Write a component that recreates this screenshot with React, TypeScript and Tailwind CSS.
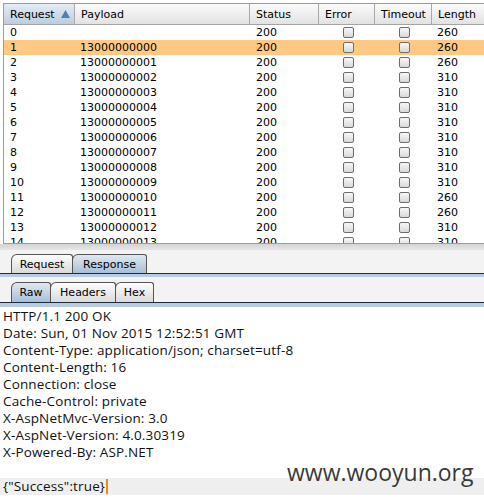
import React from "react";

const rows: [string, string, string, string][] = [
  ["0", "", "200", "260"],
  ["1", "13000000000", "200", "260"],
  ["2", "13000000001", "200", "260"],
  ["3", "13000000002", "200", "310"],
  ["4", "13000000003", "200", "310"],
  ["5", "13000000004", "200", "310"],
  ["6", "13000000005", "200", "310"],
  ["7", "13000000006", "200", "310"],
  ["8", "13000000007", "200", "310"],
  ["9", "13000000008", "200", "310"],
  ["10", "13000000009", "200", "310"],
  ["11", "13000000010", "200", "260"],
  ["12", "13000000011", "200", "260"],
  ["13", "13000000012", "200", "310"],
  ["14", "13000000013", "200", "310"],
];

const cols = "grid grid-cols-[71px_175px_69px_56px_57px_56px]";

function Check() {
  return (
    <div className="w-[11px] h-[11px] rounded-[2px] border border-[#6e6e6e] bg-gradient-to-b from-[#f7f7f7] to-[#d9d9d9]" />
  );
}

function HeaderCell({ label, sorted, last }: { label: string; sorted?: boolean; last?: boolean }) {
  return (
    <div
      className={
        "flex items-center justify-between pl-[6px] pr-[4px] " +
        (last ? "" : "border-r border-[#a9a9a9] ") +
        (sorted
          ? "bg-gradient-to-b from-[#e4ecf4] to-[#bccde0]"
          : "bg-gradient-to-b from-[#fbfbfb] to-[#e2e2e2]")
      }
    >
      <span>{label}</span>
      {sorted && (
        <svg width="9" height="8" viewBox="0 0 9 8">
          <path d="M4.5 0 L9 8 L0 8 Z" fill="#4d7fb8" />
        </svg>
      )}
    </div>
  );
}

function Tab({ label, selected, first, w }: { label: string; selected?: boolean; first?: boolean; w: string }) {
  return (
    <div
      className={
        w +
        " flex items-center justify-center border border-b-0 border-[#555] rounded-tl-[6px] rounded-tr-[3px] " +
        (first ? "" : "-ml-px ") +
        (selected
          ? "bg-gradient-to-b from-[#dfe8f2] to-[#a8bfd7]"
          : "bg-gradient-to-b from-[#fdfdfd] to-[#dadada]")
      }
    >
      {label}
    </div>
  );
}

export default function App() {
  const lines = [
    "HTTP/1.1 200 OK",
    "Date: Sun, 01 Nov 2015 12:52:51 GMT",
    "Content-Type: application/json; charset=utf-8",
    "Content-Length: 16",
    "Connection: close",
    "Cache-Control: private",
    "X-AspNetMvc-Version: 3.0",
    "X-AspNet-Version: 4.0.30319",
    "X-Powered-By: ASP.NET",
    "",
  ];
  return (
    <div className="relative w-[484px] h-[503px] overflow-hidden bg-[#f3f3f3] text-black">
      {/* results table */}
      <div className="pt-[3px] pl-[3px] bg-white">
        <div
          className="border-l border-t border-b border-[#9c9c9c] bg-white text-[11px] leading-none"
          style={{ fontFamily: '"DejaVu Sans", sans-serif' }}
        >
          <div className={cols + " h-[21px] border-b border-[#a5a5a5]"}>
            <HeaderCell label="Request" sorted />
            <HeaderCell label="Payload" />
            <HeaderCell label="Status" />
            <HeaderCell label="Error" />
            <HeaderCell label="Timeout" />
            <HeaderCell label="Length" last />
          </div>
          <div className="h-[218px] overflow-hidden">
            {rows.map((r, i) => (
              <div key={i} className={cols + " h-[15px] items-center " + (i === 1 ? "bg-[#ffc983]" : "")}>
                <div className="pl-[6px]">{r[0]}</div>
                <div className="pl-[5px]">{r[1]}</div>
                <div className="pl-[6px]">{r[2]}</div>
                <div className="flex justify-center pl-[2px]">
                  <Check />
                </div>
                <div className="flex justify-center pl-[2px]">
                  <Check />
                </div>
                <div className="pl-[5px]">{r[3]}</div>
              </div>
            ))}
          </div>
        </div>
      </div>
      <div className="h-[6px] bg-gradient-to-b from-[#d4d4d4] to-[#e6e6e6]" />

      {/* tabs */}
      <div className="text-[11px] leading-none" style={{ fontFamily: '"DejaVu Sans", sans-serif' }}>
        <div className="flex pl-[11px] pt-[4px] h-[23px]">
          <Tab label="Request" first w="w-[62px]" />
          <Tab label="Response" selected w="w-[75px]" />
        </div>
        <div className="h-px bg-[#1e2a38]" />
        <div className="h-[3px] bg-[#b7cce2]" />
        <div className="h-[5px]" />
        <div className="flex pl-[11px] h-[20px]">
          <Tab label="Raw" selected first w="w-[40px]" />
          <Tab label="Headers" w="w-[66px]" />
          <Tab label="Hex" w="w-[39px]" />
        </div>
        <div className="h-px bg-[#1e2a38]" />
        <div className="h-[4px] bg-[#b7cce2]" />
      </div>

      {/* response body */}
      <div
        className="bg-white h-[200px] pt-[1px] text-[13.5px] tracking-[0.15px] leading-[17px] text-[#111]"
        style={{ fontFamily: '"Open Sans", sans-serif' }}
      >
        {lines.map((l, i) => (
          <div key={i} className="h-[17px] pl-[3px] whitespace-pre">
            {l}
          </div>
        ))}
        <div className="h-[17px] pl-[3px] bg-[#efefef] flex items-center">
          <span>{'{"Success":true}'}</span>
          <span className="inline-block w-[2px] h-[15px] bg-[#f08a00] ml-[1px]" />
        </div>
      </div>

      {/* watermark */}
      <div
        className="absolute left-[287px] top-[461px] text-[23px] leading-none text-[#3a3a3a]"
        style={{ fontFamily: '"Open Sans", sans-serif' }}
      >
        www.wooyun.org
      </div>
    </div>
  );
}
